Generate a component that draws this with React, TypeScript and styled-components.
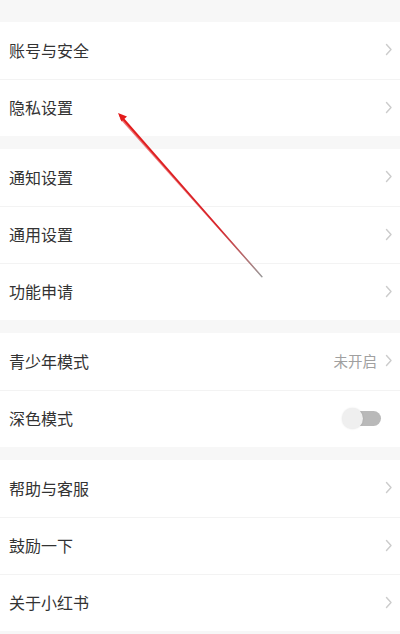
import React from 'react';
import styled, { createGlobalStyle } from 'styled-components';

const GlobalStyle = createGlobalStyle`
  html, body {
    margin: 0;
    padding: 0;
    background: #f7f7f7;
  }
  body {
    font-family: "Noto Sans CJK SC", "Noto Sans", sans-serif;
  }
`;

type Item = { label: string; value?: string; toggle?: boolean };

const groups: Item[][] = [
  [{ label: '账号与安全' }, { label: '隐私设置' }],
  [{ label: '通知设置' }, { label: '通用设置' }, { label: '功能申请' }],
  [{ label: '青少年模式', value: '未开启' }, { label: '深色模式', toggle: true }],
  [{ label: '帮助与客服' }, { label: '鼓励一下' }, { label: '关于小红书' }],
];

const Chevron = () => (
  <svg width="8" height="13" viewBox="0 0 8 13">
    <path d="M1.5 1.5 L6 6.5 L1.5 11.5" fill="none" stroke="#cccccc" strokeWidth="1.4" strokeLinecap="round" strokeLinejoin="round" />
  </svg>
);

const App = () => (
  <Page>
    <GlobalStyle />
    {groups.map((group, gi) => (
      <Group key={gi}>
        {group.map((item) => (
          <Row key={item.label}>
            <Label>{item.label}</Label>
            <Right>
              {item.value && <Value>{item.value}</Value>}
              {item.toggle ? (
                <Switch>
                  <Knob />
                </Switch>
              ) : (
                <Chevron />
              )}
            </Right>
          </Row>
        ))}
      </Group>
    ))}
    <Arrow width="400" height="634" viewBox="0 0 400 634">
      <defs>
        <linearGradient id="shaft" x1="118" y1="114" x2="262" y2="277" gradientUnits="userSpaceOnUse">
          <stop offset="0" stopColor="#e31b1b" />
          <stop offset="0.7" stopColor="#d8242a" />
          <stop offset="1" stopColor="#9a9a9a" />
        </linearGradient>
      </defs>
      <polygon points="120.5,114.2 262.6,276.6 261.6,277.4 119,115.8" fill="url(#shaft)" />
      <polygon points="118,113 127,116.5 121.5,121.5" fill="#e31b1b" />
      <polygon points="121,117 263,277 262,277.6 119.8,118.8" fill="url(#shaft)" opacity="0.6" />
    </Arrow>
  </Page>
);

const Page = styled.div`
  position: relative;
  width: 400px;
  height: 634px;
  padding-top: 22px;
  box-sizing: border-box;
  background: #f7f7f7;
  overflow: hidden;
  display: flex;
  flex-direction: column;
  gap: 13px;
`;

const Group = styled.div`
  background: #fff;
  display: flex;
  flex-direction: column;
`;

const Row = styled.div`
  height: 57px;
  box-sizing: border-box;
  display: flex;
  align-items: center;
  justify-content: space-between;
  padding: 0 7px 2px 9px;
  & + & {
    border-top: 1px solid #f3f3f3;
  }
`;

const Label = styled.span`
  font-size: 16px;
  line-height: 16px;
  color: #333;
`;

const Right = styled.div`
  display: flex;
  align-items: center;
  gap: 8px;
`;

const Value = styled.span`
  font-size: 14.5px;
  line-height: 15px;
  color: #a0a0a0;
`;

const Switch = styled.div`
  position: relative;
  width: 34px;
  height: 15px;
  margin-right: 12px;
  border-radius: 8px;
  background: #b9b9b9;
`;

const Knob = styled.div`
  position: absolute;
  left: -5px;
  top: -3px;
  width: 21px;
  height: 21px;
  border-radius: 50%;
  background: #efefef;
  box-shadow: 0 0 2px rgba(0, 0, 0, 0.12);
`;

const Arrow = styled.svg`
  position: absolute;
  left: 0;
  top: 0;
  pointer-events: none;
`;

export default App;
